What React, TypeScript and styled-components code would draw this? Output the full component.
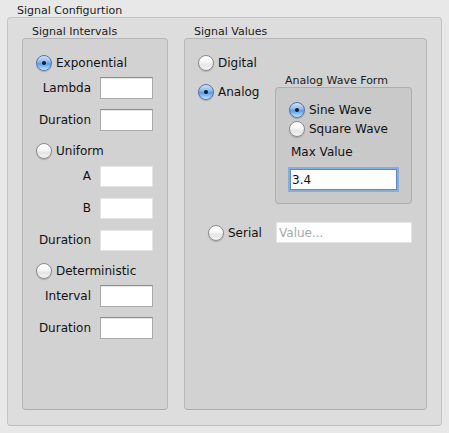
import React from "react";
import styled, { createGlobalStyle, css } from "styled-components";

const Global = createGlobalStyle`
  html, body { margin: 0; padding: 0; background: #e8e8e8; }
  body { font-family: "DejaVu Sans", "Liberation Sans", sans-serif; color: #111; }
  * { box-sizing: border-box; }
`;

const Page = styled.div`
  width: 449px;
  height: 433px;
  padding: 4px 0 0 7px;
`;

const Group = styled.div<{ $w: number }>`
  display: flex;
  flex-direction: column;
  width: ${(p) => p.$w}px;
  flex: none;
`;

const Title = styled.div`
  font-size: 11px;
  line-height: 13px;
  height: 13px;
  padding-left: 10px;
  color: #1a1a1a;
  white-space: nowrap;
`;

const levels = [
  { bg: "#dddddd", border: "#c4c4c4" },
  { bg: "#d2d2d2", border: "#b7b7b7" },
  { bg: "#c9c9c9", border: "#afafaf" },
];

const Box = styled.div<{ $level: number }>`
  border: 1px solid ${(p) => levels[p.$level].border};
  border-bottom-color: ${(p) => (p.$level === 0 ? "#bdbdbd" : "#adadad")};
  border-radius: 4px;
  background: ${(p) => levels[p.$level].bg};
`;

const OuterBox = styled(Box)`
  width: 435px;
  height: 409px;
  display: flex;
  gap: 16px;
  padding: 7px 14px 15px 14px;
`;

const FillBox = styled(Box)`
  flex: 1;
  display: flex;
  flex-direction: column;
  padding: 14px 0 0 0;
`;

const RadioRow = styled.div<{ $indent?: number; $mt?: number }>`
  display: flex;
  align-items: center;
  gap: 4px;
  height: 19px;
  margin-left: ${(p) => p.$indent ?? 0}px;
  margin-top: ${(p) => p.$mt ?? 0}px;
  font-size: 12px;
  white-space: nowrap;
`;

const Radio = styled.span<{ $checked?: boolean }>`
  position: relative;
  flex: none;
  width: 16px;
  height: 16px;
  border-radius: 50%;
  box-shadow: 0 1px 1px rgba(0, 0, 0, 0.18);
  ${(p) =>
    p.$checked
      ? css`
          border: 1px solid #5476a6;
          background: linear-gradient(
            to bottom,
            #cfe3f8 0%,
            #8fbcec 40%,
            #5d9de4 55%,
            #8cc3f4 80%,
            #c9e6ff 100%
          );
          &::after {
            content: "";
            position: absolute;
            left: 5px;
            top: 5px;
            width: 4px;
            height: 4px;
            border-radius: 50%;
            background: #141c28;
          }
        `
      : css`
          border: 1px solid #8c8c8c;
          background: linear-gradient(
            to bottom,
            #ffffff 0%,
            #f6f6f6 45%,
            #e6e6e6 60%,
            #f2f2f2 100%
          );
        `}
`;

const FieldRow = styled.div`
  display: flex;
  align-items: center;
  height: 32px;
`;

const FieldLabel = styled.span`
  width: 68px;
  margin-right: 9px;
  text-align: right;
  font-size: 12px;
  white-space: nowrap;
`;

const Field = styled.input<{ $enabled?: boolean; $w?: number }>`
  width: ${(p) => p.$w ?? 53}px;
  height: ${(p) => (p.$enabled ? 22 : 21)}px;
  margin: 0;
  padding: 0 2px;
  font-family: "DejaVu Sans", sans-serif;
  font-size: 12px;
  color: #111;
  background: #ffffff;
  outline: none;
  border-radius: 0;
  ${(p) =>
    p.$enabled
      ? css`
          border: 1px solid #aaaaaa;
          border-top-color: #8e8e8e;
          box-shadow: inset 0 1px 0 #e6e6e6;
        `
      : css`
          border: 1px solid #e4e4e4;
        `}
  &::placeholder {
    color: #a9a9a9;
  }
`;

const AnalogRow = styled.div`
  display: flex;
  margin-top: 2px;
`;

const AnalogLeft = styled.div`
  width: 90px;
  padding-top: 8px;
  flex: none;
`;

const WaveBox = styled(Box)`
  height: 117px;
  display: flex;
  flex-direction: column;
  align-items: flex-start;
  padding: 12px 0 0 13px;
`;

const MaxLabel = styled.div`
  margin: 7px 0 0 2px;
  font-size: 12px;
  line-height: 15px;
`;

const FocusField = styled.input`
  margin: 9px 0 0 1px;
  width: 107px;
  height: 21px;
  padding: 0 1px;
  font-family: "DejaVu Sans", sans-serif;
  font-size: 12px;
  color: #111;
  background: #fff;
  outline: none;
  border: 1px solid #5d8ac4;
  box-shadow: 0 0 0 2px rgba(120, 165, 225, 0.8);
`;

const SerialRow = styled.div`
  display: flex;
  align-items: center;
  margin-top: 18px;
  padding-left: 23px;
`;

const SerialLeft = styled.div`
  width: 68px;
  flex: none;
`;

export default function App() {
  return (
    <>
      <Global />
      <Page>
        <Title>Signal Configurtion</Title>
        <OuterBox $level={0}>
          <Group $w={146}>
            <Title>Signal Intervals</Title>
            <FillBox $level={1}>
              <RadioRow $indent={13}>
                <Radio $checked />
                Exponential
              </RadioRow>
              <FieldRow>
                <FieldLabel>Lambda</FieldLabel>
                <Field $enabled readOnly />
              </FieldRow>
              <FieldRow>
                <FieldLabel>Duration</FieldLabel>
                <Field $enabled readOnly />
              </FieldRow>
              <RadioRow $indent={13} $mt={5}>
                <Radio />
                Uniform
              </RadioRow>
              <FieldRow>
                <FieldLabel>A</FieldLabel>
                <Field readOnly />
              </FieldRow>
              <FieldRow>
                <FieldLabel>B</FieldLabel>
                <Field readOnly />
              </FieldRow>
              <FieldRow>
                <FieldLabel>Duration</FieldLabel>
                <Field readOnly />
              </FieldRow>
              <RadioRow $indent={13} $mt={5}>
                <Radio />
                Deterministic
              </RadioRow>
              <FieldRow>
                <FieldLabel>Interval</FieldLabel>
                <Field $enabled readOnly />
              </FieldRow>
              <FieldRow>
                <FieldLabel>Duration</FieldLabel>
                <Field $enabled readOnly />
              </FieldRow>
            </FillBox>
          </Group>
          <Group $w={243}>
            <Title>Signal Values</Title>
            <FillBox $level={1}>
              <RadioRow $indent={13}>
                <Radio />
                Digital
              </RadioRow>
              <AnalogRow>
                <AnalogLeft>
                  <RadioRow $indent={13}>
                    <Radio $checked />
                    Analog
                  </RadioRow>
                </AnalogLeft>
                <Group $w={137}>
                  <Title>Analog Wave Form</Title>
                  <WaveBox $level={2}>
                    <RadioRow>
                      <Radio $checked />
                      Sine Wave
                    </RadioRow>
                    <RadioRow>
                      <Radio />
                      Square Wave
                    </RadioRow>
                    <MaxLabel>Max Value</MaxLabel>
                    <FocusField defaultValue="3.4" />
                  </WaveBox>
                </Group>
              </AnalogRow>
              <SerialRow>
                <SerialLeft>
                  <RadioRow>
                    <Radio />
                    Serial
                  </RadioRow>
                </SerialLeft>
                <Field $w={136} placeholder="Value..." readOnly />
              </SerialRow>
            </FillBox>
          </Group>
        </OuterBox>
      </Page>
    </>
  );
}
